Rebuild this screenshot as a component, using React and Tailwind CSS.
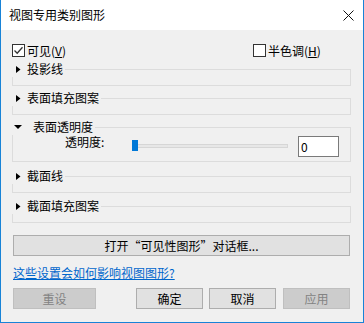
import React from "react";

const F = "font-['Noto_Sans_CJK_SC','Microsoft_YaHei',sans-serif]";

function ArrowRight() {
  return (
    <svg width="5" height="7" viewBox="0 0 5 7" className="block">
      <path d="M0 0 L4.5 3.5 L0 7 Z" fill="#000" />
    </svg>
  );
}

function ArrowDown() {
  return (
    <svg width="8" height="4" viewBox="0 0 8 4" className="block">
      <path d="M0 0 L8 0 L4 4 Z" fill="#000" />
    </svg>
  );
}

function Group({ title, expanded, className = "", children }) {
  return (
    <div className={`relative border border-[#dcdcdc] ${className}`}>
      <div className="absolute left-[-3px] top-[-9px] h-[16px] flex items-center bg-[#f0f0f0] pr-[2px]">
        {expanded ? (
          <>
            <div className="ml-[4px]">
              <ArrowDown />
            </div>
            <span className="ml-[11px] text-[12px] leading-[16px] text-black">{title}</span>
          </>
        ) : (
          <>
            <div className="ml-[6px]">
              <ArrowRight />
            </div>
            <span className="ml-[6px] text-[12px] leading-[16px] text-black">{title}</span>
          </>
        )}
      </div>
      {children}
    </div>
  );
}

function Check({ checked }) {
  return (
    <div className="w-[13px] h-[13px] border border-[#333333] bg-white flex items-center justify-center shrink-0">
      {checked && (
        <svg width="11" height="11" viewBox="0 0 11 11" className="block">
          <path d="M1.5 5.5 L4.2 8.2 L9.5 2.2" stroke="#333" strokeWidth="1.3" fill="none" />
        </svg>
      )}
    </div>
  );
}

function Btn({ children, disabled, className = "" }) {
  return (
    <div
      className={`h-[21px] flex items-center justify-center text-[12px] leading-[16px] border ${
        disabled
          ? "bg-[#cccccc] border-[#bfbfbf] text-[#838383]"
          : "bg-[#e1e1e1] border-[#adadad] text-black"
      } ${className}`}
    >
      {children}
    </div>
  );
}

export default function App() {
  return (
    <div className={`w-[364px] h-[323px] flex flex-col border-l border-r border-b border-[#1883d7] bg-[#f0f0f0] ${F}`}>
      {/* Title bar */}
      <div className="h-[30px] bg-white flex items-center justify-between shrink-0">
        <span className="ml-[8px] text-[12px] leading-[16px] text-black">视图专用类别图形</span>
        <svg width="11" height="11" viewBox="0 0 11 11" className="mr-[9px] block">
          <path d="M0.5 0.5 L10.5 10.5 M10.5 0.5 L0.5 10.5" stroke="#111" strokeWidth="1" />
        </svg>
      </div>

      {/* Body */}
      <div className="flex flex-col pl-[11px] pr-[12px]">
        {/* Checkboxes */}
        <div className="mt-[14px] h-[13px] flex items-center">
          <div className="w-[241px] flex items-center">
            <Check checked />
            <span className="ml-[2px] text-[12px] leading-[16px] text-black">
              可见(<u>V</u>)
            </span>
          </div>
          <div className="flex items-center">
            <Check />
            <span className="ml-[2px] text-[12px] leading-[16px] text-black">
              半色调(<u>H</u>)
            </span>
          </div>
        </div>

        <Group title="投影线" className="mt-[12px] h-[17px]" />
        <Group title="表面填充图案" className="mt-[12px] h-[17px]" />
        <Group title="表面透明度" expanded className="mt-[12px] h-[35px]">
          <div className="flex items-start">
            <span className="ml-[52px] mt-[6px] w-[67px] text-[12px] leading-[16px] text-black">透明度:</span>
            <div className="relative mt-[12px] w-[156px] h-[11px]">
              <div className="absolute left-[1px] right-0 top-[4px] h-[4px] border border-[#d6d6d6] bg-[#e7e7e7]" />
              <div className="absolute left-0 top-0 w-[6px] h-[11px] bg-[#0078d7]" />
            </div>
            <div className="ml-[10px] mt-[8px] w-[41px] h-[21px] border border-[#7a7a7a] bg-white flex items-center pl-[2px] text-[12px] leading-[16px] text-black">
              0
            </div>
          </div>
        </Group>
        <Group title="截面线" className="mt-[14px] h-[17px]" />
        <Group title="截面填充图案" className="mt-[13px] h-[17px]" />

        <Btn className="mt-[12px] ml-[1px] mr-[1px]">打开“可见性图形”对话框...</Btn>

        <a className="mt-[9px] ml-[1px] self-start text-[12px] leading-[16px] text-[#0066cc] underline">
          这些设置会如何影响视图图形?
        </a>

        <div className="mt-[7px] ml-[1px] flex">
          <Btn disabled className="w-[83px]">重设</Btn>
          <Btn className="ml-[40px] w-[67px]">确定</Btn>
          <Btn className="ml-[6px] w-[67px]">取消</Btn>
          <Btn disabled className="ml-[7px] w-[67px]">应用</Btn>
        </div>
      </div>
    </div>
  );
}
